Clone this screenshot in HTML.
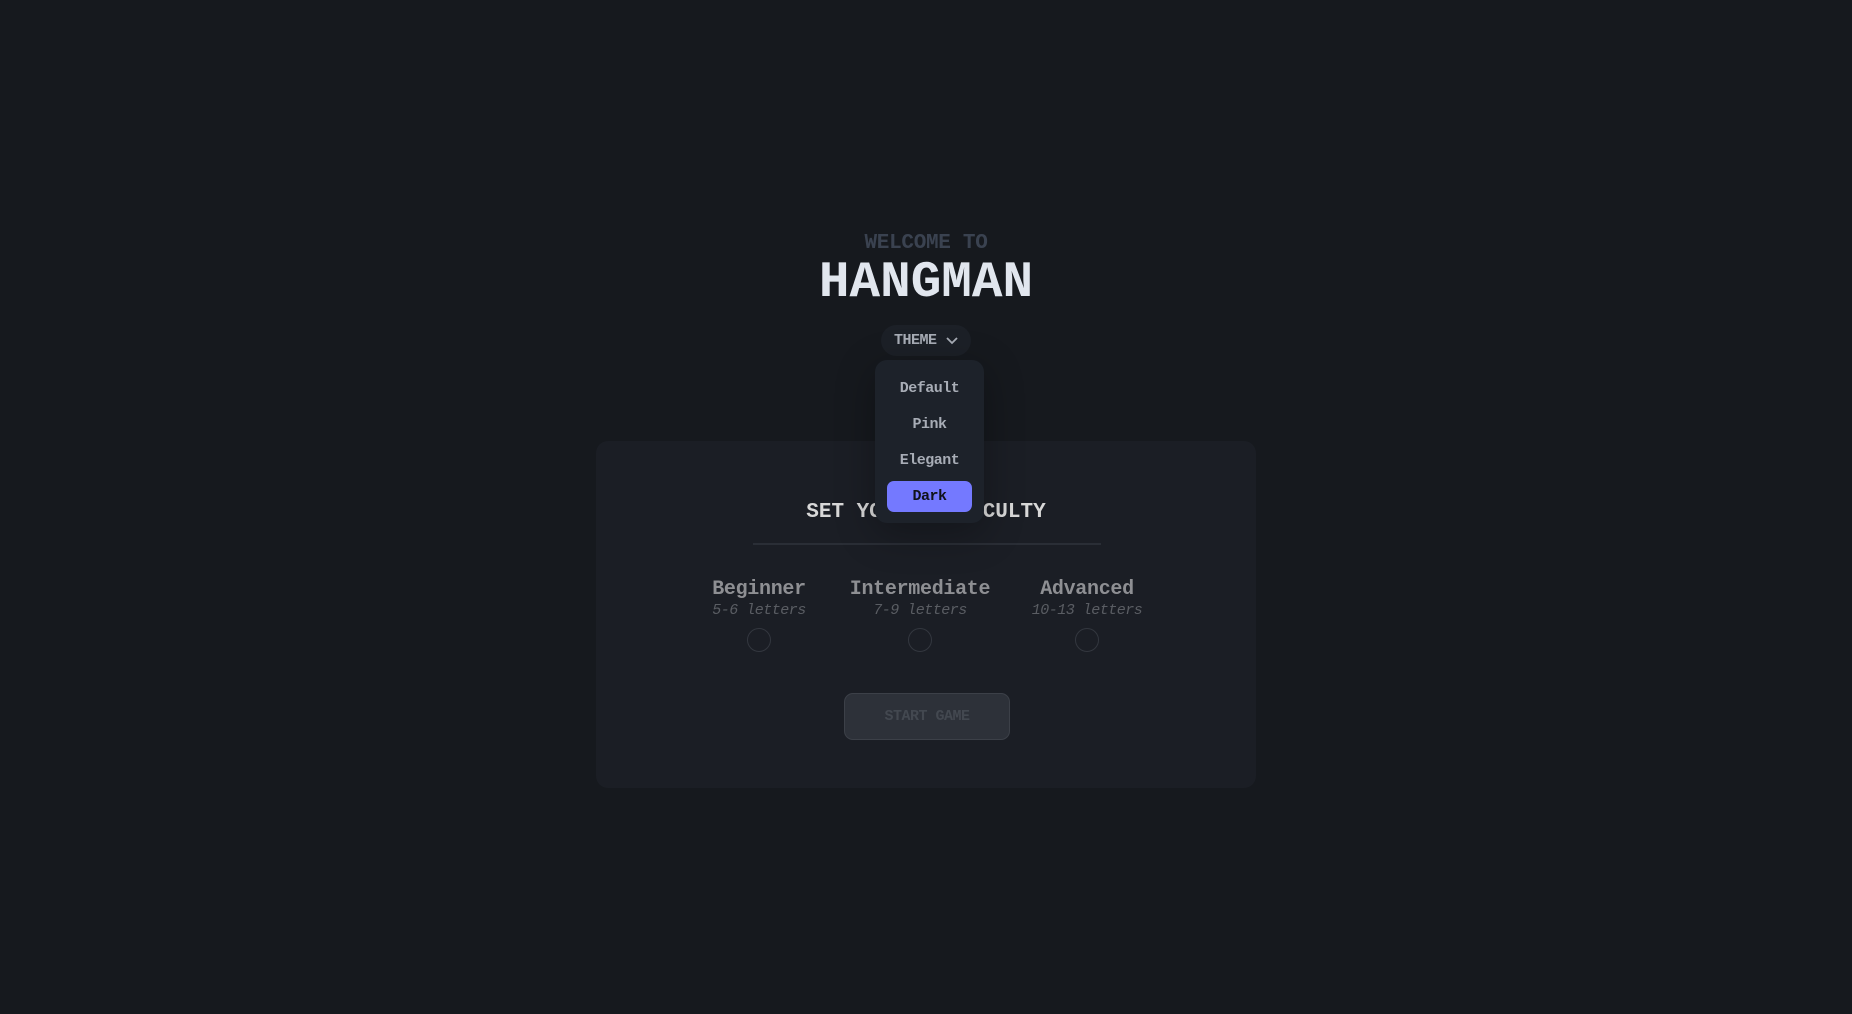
<!DOCTYPE html>
<html><head><style>
*{margin:0;padding:0;box-sizing:border-box}
body{width:1852px;height:1014px;background:#16191e;font-family:"Liberation Mono","DejaVu Sans Mono",monospace;position:relative;overflow:hidden}
.c{position:absolute;left:0;width:1852px;text-align:center}
.card{position:absolute;left:596px;top:441px;width:660px;height:347px;background:#1b1e25;border-radius:12px}
.opt{position:absolute;text-align:center;width:200px}
.opt .n{font-size:20px;font-weight:bold;color:#8e8f93;letter-spacing:-0.3px}
.opt .s{font-size:15px;font-style:italic;color:#5a5d63;margin-top:1px;letter-spacing:-0.5px}
.opt .r{width:24px;height:24px;border:1.5px solid #33373f;border-radius:50%;margin:9px auto 0}
</style></head><body>
<div class="c" style="top:232px;font-size:21px;font-weight:bold;color:#3a4250;letter-spacing:-0.3px">WELCOME TO</div>
<div class="c" style="top:255px;font-size:51px;font-weight:bold;color:#e1e6ee;letter-spacing:0px">HANGMAN</div>
<div style="position:absolute;left:881px;top:325px;width:90px;height:31px;background:#1c2027;border-radius:16px;color:#a8adb6;font-size:15px;font-weight:bold;line-height:31px;padding-left:13px;letter-spacing:-0.5px">THEME
<svg width="14" height="10" style="position:absolute;left:64px;top:11px" viewBox="0 0 14 10"><path d="M2 2l5 5 5-5" stroke="#a8adb6" stroke-width="1.8" fill="none"/></svg></div>
<div class="card">
<div style="position:absolute;top:60px;width:660px;text-align:center;font-size:21px;font-weight:bold;color:#d8d8d8;letter-spacing:0px">SET YOUR DIFFICULTY</div>
<div style="position:absolute;left:157px;top:102px;width:348px;height:2px;background:#2a2e36"></div>
<div class="opt" style="left:63px;top:137px"><div class="n">Beginner</div><div class="s">5-6 letters</div><div class="r"></div></div>
<div class="opt" style="left:224px;top:137px"><div class="n">Intermediate</div><div class="s">7-9 letters</div><div class="r"></div></div>
<div class="opt" style="left:391px;top:137px"><div class="n">Advanced</div><div class="s">10-13 letters</div><div class="r"></div></div>
<div style="position:absolute;left:248px;top:252px;width:166px;height:47px;background:#2d3139;border:1px solid #3c4048;border-radius:9px;color:#434850;font-size:15px;font-weight:bold;line-height:45px;text-align:center;letter-spacing:-0.5px">START GAME</div>
</div>
<div style="position:absolute;left:875px;top:360px;width:109px;height:163px;background:#1d222a;border-radius:12px;box-shadow:0 10px 40px rgba(0,0,0,.3);text-align:center;font-size:15px;font-weight:bold;color:#a8adb6;letter-spacing:-0.5px">
<div style="position:absolute;top:20px;width:109px">Default</div>
<div style="position:absolute;top:56px;width:109px">Pink</div>
<div style="position:absolute;top:92px;width:109px">Elegant</div>
<div style="position:absolute;left:12px;top:121px;width:85px;height:31px;background:#7479ff;border-radius:7px;color:#10121a;line-height:31px">Dark</div>
</div>
</body></html>
